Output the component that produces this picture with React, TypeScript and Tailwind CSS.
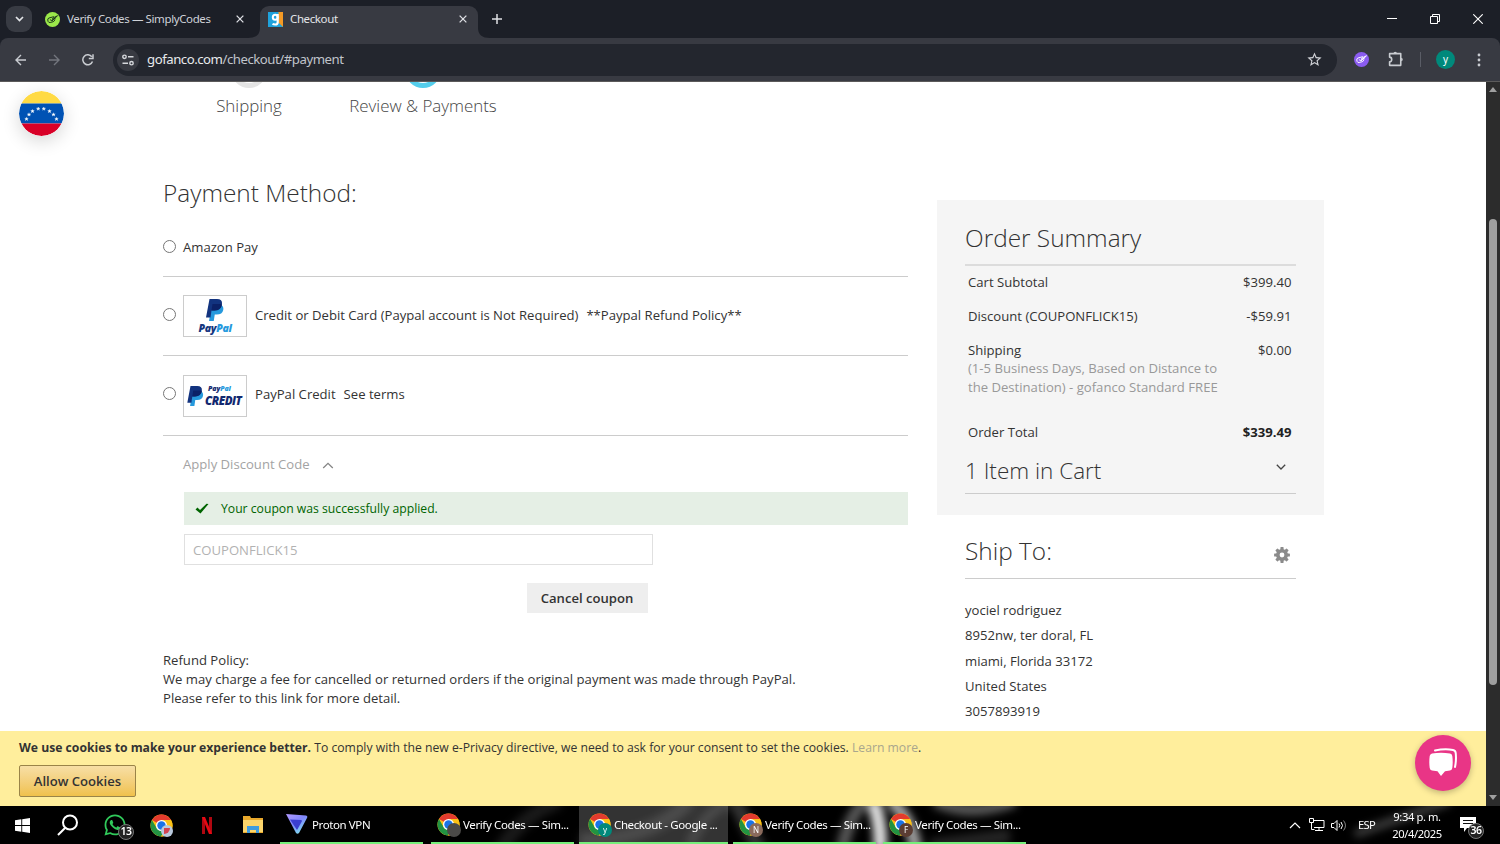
import React from "react";
import { FaWhatsapp } from "react-icons/fa";
import { MdStarBorder } from "react-icons/md";

const UI = "font-['Noto_Sans','Open_Sans',sans-serif]";

function ChromeLogo() {
  return (
    <svg viewBox="0 0 48 48" className="h-full w-full">
      <circle cx="24" cy="24" r="23" fill="#fbc116" />
      <path d="M24 24 4.1 12.5A23 23 0 0 1 43.9 12.5H24Z" fill="#e33b2e" />
      <path d="M4.1 12.5A23 23 0 0 0 23 47l10-17.5L24 24 14 29.7Z" fill="#229342" />
      <path d="M24 12.5h19.9A23 23 0 0 1 23 47l11-17.3Z" fill="#fbc116" />
      <circle cx="24" cy="24" r="11.5" fill="#fff" />
      <circle cx="24" cy="24" r="8.8" fill="#1a73e8" />
    </svg>
  );
}

function SimplyMark({ bg, fg }: { bg: string; fg: string }) {
  return (
    <svg viewBox="0 0 30 30" className="h-[15px] w-[15px] shrink-0">
      <circle cx="15" cy="15" r="15" fill={bg} />
      <g fill="none" stroke={fg} strokeWidth="1.9" strokeLinejoin="round" strokeLinecap="round">
        <path d="M17 9.500 8 12q-3 1-2.500 4l.8 3q1 2.500 4 2l6-1.500q3-1 3.500-4" />
        <path d="m10.500 15.500 3.500 2.500L25 7.500l-9 4.500-1.500 3 6-2.500" />
      </g>
    </svg>
  );
}

function CloseX() {
  return (
    <svg viewBox="0 0 10 10" width="8" height="8" className="shrink-0">
      <path d="m.8.8 8.4 8.4M9.2.8.8 9.2" stroke="#dfe1e5" strokeWidth="1.6" />
    </svg>
  );
}

function TabStrip() {
  return (
    <div className="flex h-[38px] shrink-0 items-end bg-[#1c1f27]">
      <div className="flex h-[38px] w-[45px] items-center pl-1.5">
        <div className="flex h-[26px] w-[26px] items-center justify-center rounded-[9px] bg-[#383b43]">
          <svg width="9" height="6" viewBox="0 0 9 6"><path d="m1 1 3.5 3.5L8 1" fill="none" stroke="#e3e5e8" strokeWidth="1.7" /></svg>
        </div>
      </div>
      <div className="flex h-[38px] w-[203px] items-center">
        <SimplyMark bg="#9be84a" fg="#18301a" />
        <span className="ml-[7px] w-[169px] whitespace-nowrap text-[11.5px] tracking-[-0.39px] text-[#cfd2d8]">Verify Codes — SimplyCodes</span>
        <CloseX />
      </div>
      <div className="flex h-[32px] items-end">
        <svg width="12" height="10" viewBox="0 0 12 10"><path d="M12 0v10H0Q12 10 12 0Z" fill="#383a42" /></svg>
        <div className="flex h-[32px] w-[218px] items-center rounded-t-[9px] bg-[#383a42] pb-1.5 pl-2 pr-[11px]">
          <svg width="15" height="15" viewBox="0 0 15 15" className="shrink-0">
            <path d="M0 0h15v15H0Z" fill="#1fa2dc" />
            <path d="M10.500 0H15v15l-4.500-4.500Z" fill="#f49a25" />
            <path d="M9.700 2v8.200q0 2.300-2.500 2.300-1.600 0-2.700-.6" fill="none" stroke="#fff" strokeWidth="2.200" />
            <ellipse cx="7.200" cy="5.300" rx="2.400" ry="2.500" fill="none" stroke="#fff" strokeWidth="2" />
          </svg>
          <span className="ml-[7px] flex-1 text-[11.5px] tracking-[-0.38px] text-[#e3e5e8]">Checkout</span>
          <CloseX />
        </div>
        <svg width="12" height="10" viewBox="0 0 12 10"><path d="M0 0v10h12Q0 10 0 0Z" fill="#383a42" /></svg>
      </div>
      <div className="flex h-[38px] flex-1 items-center pl-[2px]">
        <svg width="10" height="10" viewBox="0 0 10 10"><path d="M5 0v10M0 5h10" stroke="#dfe1e5" strokeWidth="1.5" /></svg>
      </div>
      <div className="flex h-[38px] w-[113px] items-center justify-between pr-[17px]">
        <svg width="10" height="10" viewBox="0 0 10 10"><path d="M0 4.500h10" stroke="#fff" /></svg>
        <svg width="10" height="10" viewBox="0 0 10 10" fill="none" stroke="#fff"><path d="M.5 2.500h7v7h-7ZM2.500 2.500v-2h7v7h-2" /></svg>
        <svg width="10" height="10" viewBox="0 0 10 10"><path d="m.3.3 9.400 9.400M9.700.3.3 9.700" stroke="#fff" strokeWidth="1.1" /></svg>
      </div>
    </div>
  );
}

function Toolbar() {
  return (
    <div className="shrink-0 bg-[#1c1f27]">
      <div className="flex h-[44px] items-center rounded-t-[8px] border-b border-[#5b5a5a] bg-[#383a42] pl-[15px]">
        <svg width="11" height="12" viewBox="0 0 11 12" fill="none" stroke="#c9ccd1" strokeWidth="1.4"><path d="M11 6H1M6 1 1 6l5 5" /></svg>
        <svg className="ml-[23px]" width="11" height="12" viewBox="0 0 11 12" fill="none" stroke="#73767d" strokeWidth="1.4"><path d="M0 6h10M5 1l5 5-5 5" /></svg>
        <svg className="ml-[22px]" width="12" height="12" viewBox="0 0 12 12" fill="none" stroke="#c9ccd1" strokeWidth="1.5"><path d="M10.500 7.500A5 5 0 1 1 9.800 2.700M11 .3v4.200H6.800" /></svg>
        <div className="ml-[19px] flex h-8 w-[1224px] items-center rounded-full bg-[#23262e] pl-1">
          <div className="flex h-[22px] w-[22px] items-center justify-center rounded-full bg-[#383a42]">
            <svg width="12" height="12" viewBox="0 0 12 12" fill="none" stroke="#d6d8dc" strokeWidth="1.4">
              <circle cx="2.500" cy="2.800" r="1.700" /><path d="M6 2.800h5.500M.5 9.200H6" /><circle cx="9.500" cy="9.200" r="1.700" />
            </svg>
          </div>
          <span className="ml-2 flex-1 text-[13.2px] tracking-[-0.47px] text-[#c0c4cb]"><span className="text-[#e8eaed]">gofanco.com</span>/checkout/#payment</span>
          <MdStarBorder className="mr-[14px] h-[17px] w-[17px] text-[#cfd1d6]" />
        </div>
        <div className="flex flex-1 items-center pl-[17px]">
          <SimplyMark bg="#8b5cf0" fg="#ffffff" />
          <svg className="ml-[19px]" width="17" height="17" viewBox="0 0 16 16" fill="none" stroke="#c9ccd1" strokeWidth="1.5">
            <path d="M1.500 2.500h10.500v11H1.500v-3.300q2 0 2-2.200t-2-2.200Z" strokeLinejoin="round" />
            <path d="M5.200 2.200a1.600 1.600 0 0 1 3.200 0ZM12.300 6.400a1.600 1.600 0 0 1 0 3.200Z" fill="#c9ccd1" stroke="none" />
          </svg>
          <div className="ml-[15px] h-[15px] w-px bg-[#5a5d66]" />
          <div className="ml-[15px] flex h-[19px] w-[19px] items-center justify-center rounded-full bg-[#00897b] pb-px text-[10px] text-white">y</div>
          <svg className="ml-[22px]" width="4" height="14" viewBox="0 0 4 14" fill="#c9ccd1"><circle cx="2" cy="2" r="1.400" /><circle cx="2" cy="7" r="1.400" /><circle cx="2" cy="12" r="1.400" /></svg>
        </div>
      </div>
    </div>
  );
}

function Flag() {
  const stars = [[7.5, 28], [10, 23.5], [13.500, 20.2], [19.2, 17.800], [24.8, 17.800], [30.500, 20.200], [34.500, 23.500], [37.500, 28]];
  return (
    <svg viewBox="0 0 45 45" className="h-[45px] w-[45px] rounded-full shadow-[0_5px_18px_rgba(0,0,0,0.16)]">
      <clipPath id="disc"><circle cx="22.500" cy="22.500" r="22.500" /></clipPath>
      <g clipPath="url(#disc)">
        <path d="M0 0h45v12.500H0Z" fill="#ffda44" />
        <path d="M0 12.500h45v20H0Z" fill="#0052b4" />
        <path d="M0 32.500h45V45H0Z" fill="#d80027" />
        {stars.map(([x, y]) => (
          <path key={x} transform={`translate(${x} ${y})`} d="M0-1.800.5-.6 1.800-.6.800.2 1.200 1.500 0 .8-1.200 1.500-.8.2-1.800-.6-.5-.6Z" fill="#fff" stroke="#fff" strokeWidth=".3" />
        ))}
      </g>
    </svg>
  );
}

function Gear() {
  const teeth = [0, 45, 90, 135];
  return (
    <svg className="mt-2" width="16" height="16" viewBox="0 0 16 16">
      {teeth.map((a) => (
        <rect key={a} x="6.400" y="0.100" width="3.200" height="15.800" rx=".6" fill="#8b8b8b" transform={`rotate(${a} 8 8)`} />
      ))}
      <circle cx="8" cy="8" r="6" fill="#8b8b8b" />
      <circle cx="8" cy="8" r="2.400" fill="#fff" />
    </svg>
  );
}

function PayPalP({ className }: { className: string }) {
  return (
    <svg viewBox="0 0 36 44" className={className}>
      <path d="M12 11h17q7 3 5.500 11-2 9-13 9h-4l-2 13H6Z" fill="#2699dd" />
      <path d="M7 0h15q11 0 10 10-2 13-15 13h-6l-2 14H0Z" fill="#12337f" />
      <path d="M13 10h14q5 0 5 1-2 12-15 12h-6Z" fill="#0b2167" />
    </svg>
  );
}

function Radio({ className = "" }: { className?: string }) {
  return <span className={`mr-[7px] h-[13px] w-[13px] shrink-0 rounded-full border border-[#767676] bg-white ${className}`} />;
}

function PaymentColumn() {
  return (
    <div className="w-[745px]">
      <h1 className="flex h-[38px] items-center text-[24.4px] font-light">Payment Method:</h1>
      <div className="flex h-[65px] items-center border-b border-[#ccc] pt-[8px]">
        <Radio className="mb-[3px]" />Amazon Pay
      </div>
      <div className="flex h-[79px] items-center border-b border-[#ccc]">
        <Radio className="mb-[3px]" />
        <div className="flex h-[42px] w-[64px] flex-col items-center border border-[#ccc]">
          <PayPalP className="mt-[3px] h-[22px] w-[18px]" />
          <div className="mt-px text-[10.5px] font-extrabold italic leading-[13px] tracking-[-0.3px] text-[#14377f]">Pay<span className="text-[#2699dd]">Pal</span></div>
        </div>
        <span className="ml-2">Credit or Debit Card (Paypal account is Not Required)</span>
        <span className="ml-2">**Paypal Refund Policy**</span>
      </div>
      <div className="flex h-[80px] items-center border-b border-[#ccc]">
        <Radio className="mb-[4px]" />
        <div className="flex h-[42px] w-[64px] items-center border border-[#ccc] pl-[3px]">
          <PayPalP className="h-[20px] w-[17px] shrink-0" />
          <div className="mb-px ml-[1px] font-extrabold italic text-[#12286f]">
            <div className="pl-[3px] text-[7px] leading-[10px] tracking-[-0.1px]">Pay<span className="text-[#2699dd]">Pal</span></div>
            <div className="text-[11.5px] leading-[13px] tracking-[-0.5px]">CREDIT</div>
          </div>
        </div>
        <span className="mb-[2px] ml-2">PayPal Credit</span>
        <span className="mb-[2px] ml-2">See terms</span>
      </div>
      <div className="pl-[21px]">
        <div className="flex h-[56px] items-center pt-px text-[#a3a3a3]">
          <span className="-ml-px">Apply Discount Code</span>
          <svg className="ml-[12px] mt-[2px]" width="12" height="7" viewBox="0 0 12 7"><path d="m1.200 6 4.800-4.700L10.800 6" fill="none" stroke="#858585" strokeWidth="1.300" /></svg>
        </div>
        <div className="flex h-[33px] items-center bg-[#e5efe5] pl-[11px] text-[12.2px] text-[#006400]">
          <svg width="14" height="11" viewBox="0 0 14 11"><path d="M.5 6.500 2.500 4.500 5 7 11.500.8 13.500 1 5.500 10.500Z" fill="#006400" /></svg>
          <span className="ml-3 mt-px">Your coupon was successfully applied.</span>
        </div>
        <div className="mt-[9px] flex h-[31px] w-[469px] items-center border border-[#e0e0e0] pl-2 pt-[2px] text-[#b2b2b2]">COUPONFLICK15</div>
        <div className="mt-[18px] flex w-[464px] justify-end">
          <button className="h-[30px] w-[121px] bg-[#eee] pr-px pt-px font-semibold">Cancel coupon</button>
        </div>
      </div>
      <div className="mt-[38px] leading-[18.75px]">
        <p>Refund Policy:</p>
        <p>We may charge a fee for cancelled or returned orders if the original payment was made through PayPal.</p>
        <p>Please refer to this link for more detail.</p>
      </div>
    </div>
  );
}

function SideColumn() {
  return (
    <div className="ml-[29px] w-[387px]">
      <div className="mt-[26px] h-[315px] bg-[#f5f5f5] px-7">
        <h2 className="flex h-[66px] items-center border-b-2 border-[#dcdcdc] pt-[12px] text-[24.4px] font-light">Order Summary</h2>
        <div className="pl-[3px] pr-[4.500px] leading-[18.75px]">
          <div className="flex h-[33px] items-center justify-between"><span>Cart Subtotal</span><span>$399.40</span></div>
          <div className="flex h-[34px] items-center justify-between"><span>Discount (COUPONFLICK15)</span><span>-$59.91</span></div>
          <div className="flex h-[81px] justify-between pt-[7.500px]">
            <div>
              <div>Shipping</div>
              <div className="w-[256px] text-[#999]">(1-5 Business Days, Based on Distance to the Destination) - gofanco Standard FREE</div>
            </div>
            <span>$0.00</span>
          </div>
          <div className="flex h-[37px] items-center justify-between"><span>Order Total</span><span className="font-bold text-[#222]">$339.49</span></div>
        </div>
        <div className="flex h-[43px] items-center justify-between border-b border-[#ccc] pb-[3px] pr-[10px] text-[22.5px] font-light">
          1 Item in Cart
          <svg className="mb-2" width="10" height="6" viewBox="0 0 10 6"><path d="m.8.8 4.200 4.200L9.200.8" fill="none" stroke="#444" strokeWidth="1.300" /></svg>
        </div>
      </div>
      <div className="mx-7">
        <div className="flex h-[64px] items-center justify-between border-b border-[#ccc] pr-1.5 pt-[9px]">
          <h2 className="text-[24.4px] font-light">Ship To:</h2>
          <Gear />
        </div>
        <div className="pt-[19px] leading-[25.3px]">
          <p>yociel rodriguez</p>
          <p>8952nw, ter doral, FL</p>
          <p>miami, Florida 33172</p>
          <p>United States</p>
          <p>3057893919</p>
        </div>
      </div>
    </div>
  );
}

function Steps() {
  return (
    <div className="flex h-[92px] items-start overflow-hidden pl-[199px] text-[16.9px] font-light text-[#444]">
      <div className="flex w-[100px] flex-col items-center">
        <div className="mt-[-30px] h-9 w-9 shrink-0 rounded-full border-[5px] border-[#e4e4e4]" />
        <span className="mt-[5px]">Shipping</span>
      </div>
      <div className="flex w-[248px] flex-col items-center">
        <div className="mt-[-30px] h-9 w-9 shrink-0 rounded-full border-[5px] border-[#54cdeb]" />
        <span className="mt-[5px]">Review &amp; Payments</span>
      </div>
    </div>
  );
}

function CookieBar() {
  return (
    <div className="h-[75px] shrink-0 bg-[#ffee9c] pl-[19px] pt-[7px] text-[12.2px] leading-5 text-[#333]">
      <p><b>We use cookies to make your experience better.</b> To comply with the new e-Privacy directive, we need to ask for your consent to set the cookies. <span className="text-[#a9a68d]">Learn more</span>.</p>
      <button className="mt-[7px] h-8 w-[117px] rounded-[2px] border border-[#9a8448] bg-linear-to-b from-[#f7dfa5] to-[#f0c14b] text-[13.1px] font-semibold text-[#333]">Allow Cookies</button>
    </div>
  );
}

function ChromeTask({ label, badge, tone, active, edge }: { label: string; badge: string; tone: string; active?: boolean; edge: string }) {
  return (
    <div className={`flex h-[38px] items-center border-b-2 border-[#76ee7b] ${edge} ${active ? "bg-white/20" : ""}`}>
      <div className="relative h-[23px] w-[23px] shrink-0">
        <ChromeLogo />
        <span className={`absolute left-[10px] top-[10px] flex h-[14px] w-[14px] items-center justify-center rounded-full text-[8px] text-white ${tone}`}>{badge}</span>
      </div>
      <span className="ml-[3px] mt-px whitespace-nowrap text-[11.5px] tracking-[-0.38px] text-white">{label}</span>
    </div>
  );
}

function Taskbar() {
  return (
    <div className="relative h-[38px] shrink-0 overflow-hidden bg-black text-white">
      <svg className="absolute inset-0" width="1500" height="38" viewBox="0 0 1500 38">
        <defs><filter id="soft" x="-5%" y="-50%" width="110%" height="200%"><feGaussianBlur stdDeviation="4" /></filter></defs>
        <g filter="url(#soft)" fill="none" stroke="#fff">
          <path d="M500 45Q520 10 560-5" strokeWidth="14" opacity=".1" />
          <path d="M580 34Q650 35 690-5" strokeWidth="14" opacity=".12" />
          <path d="M690 40Q700 10 730-5" strokeWidth="10" opacity=".12" />
          <path d="M735-5 760 45" strokeWidth="14" opacity=".2" />
          <path d="M842 45Q848 10 866-5" strokeWidth="12" opacity=".35" />
          <path d="M873-5Q882 20 880 45" strokeWidth="13" opacity=".9" />
          <path d="M890-5Q912 12 916 45" strokeWidth="12" opacity=".65" />
          <path d="M935-5Q970 12 1015-5" strokeWidth="12" opacity=".35" />
          <path d="M930 40 1010 30" strokeWidth="14" opacity=".14" />
          <path d="M1355 28 1450-5" strokeWidth="8" opacity=".25" />
        </g>
      </svg>
      <div className="relative flex h-[38px] items-center">
        <svg className="ml-[15px]" width="15" height="15" viewBox="0 0 15 15" fill="#fff"><path d="M0 2.200 6.300 1.300V7H0ZM7.200 1.200 15 0v7H7.200ZM0 8h6.300v5.700L0 12.800ZM7.200 8H15v7l-7.800-1.200Z" /></svg>
        <svg className="ml-[27px]" width="22" height="22" viewBox="0 0 22 22" fill="none" stroke="#fff" strokeWidth="2"><circle cx="13" cy="8.500" r="7" /><path d="M8.300 13.700 1 21" /></svg>
        <div className="relative ml-[24px] h-[24px] w-[24px]">
          <FaWhatsapp className="h-6 w-6 text-[#30c95a]" />
          <span className="absolute left-[15px] top-[11px] flex h-4 w-4 items-center justify-center rounded-full border border-[#777] bg-[#222] text-[10.500px] font-semibold tracking-[-0.4px]">13</span>
        </div>
        <div className="relative ml-[23px] h-[23px] w-[23px]">
          <ChromeLogo />
          <span className="absolute left-[11px] top-[11px] flex h-3 w-3 items-center justify-center rounded-full bg-[#b9c9dc]"><span className="h-[6px] w-[6px] rounded-tl-[1px] rounded-br-full bg-[#d34350]" /></span>
        </div>
        <svg className="ml-[29px]" width="10" height="17" viewBox="0 0 10 17"><path d="M0 0h3v17H0ZM7 0h3v17H7Z" fill="#b00710" /><path d="M0 0h3l7 17H7Z" fill="#e50914" /></svg>
        <svg className="ml-[31px]" width="20" height="18" viewBox="0 0 20 18"><path d="M0 2V0h7l1 2h12v15H0Z" fill="#e9a92c" /><path d="M0 4h20v12H0Z" fill="#fbd56b" /><path d="M4 17v-7h12v7h-3v-3H7v3Z" fill="#3f9ce0" /></svg>
        <div className="ml-[17px] flex h-[38px] w-[143px] items-center border-b-2 border-[#76ee7b] pl-[6px]">
          <svg width="22" height="20" viewBox="0 0 22 20">
            <defs><linearGradient id="vpn" x1="0" y1="0" x2=".7" y2="1"><stop stopColor="#b49aff" /><stop offset=".5" stopColor="#7f86fa" /><stop offset="1" stopColor="#7fe0f0" /></linearGradient></defs>
            <path d="M0 0 20 1.500q2 .3 1 2.500L13 19q-1.500 1.500-3 0Z" fill="url(#vpn)" /><path d="M4 5.500 15 6q1.500.3.800 1.500L11 16Z" fill="#3b3fd0" />
          </svg>
          <span className="ml-[4px] mt-px text-[11.5px] tracking-[-0.4px]">Proton VPN</span>
        </div>
        <ChromeTask edge="ml-2 w-[143px] pl-[6px]" label="Verify Codes — Sim..." badge="" tone="bg-[#4b4a48]" />
        <ChromeTask edge="ml-[5px] w-[149px] pl-[9px]" label="Checkout - Google ..." badge="y" tone="bg-[#00897b]" active />
        <ChromeTask edge="ml-[5px] w-[143px] pl-[6px]" label="Verify Codes — Sim..." badge="N" tone="bg-[#8a6a5c]" />
        <ChromeTask edge="ml-[7px] w-[143px] pl-[6px]" label="Verify Codes — Sim..." badge="F" tone="bg-[#5b3d33]" />
        <div className="flex-1" />
        <svg width="12" height="7" viewBox="0 0 12 7"><path d="m1 6 5-5 5 5" fill="none" stroke="#fff" strokeWidth="1.200" /></svg>
        <svg className="ml-2" width="16" height="14" viewBox="0 0 16 14" fill="none" stroke="#fff"><path d="M5 2.500h10v7H5M10 9.500V12M6 12.500h8M.5.500h4v4h-4ZM2.500 4.500v7h3" /></svg>
        <svg className="ml-[6px]" width="16" height="13" viewBox="0 0 16 13" fill="none" stroke="#fff"><path d="M.5 4.500H3l3-3v10l-3-3H.5ZM8 4.500q1.500 2 0 4M10 3q3 3.500 0 7" /><path d="M12.500 1.500q4 5 0 10" opacity=".5" /></svg>
        <span className="ml-[11px] w-[18px] whitespace-nowrap text-[11.200px] tracking-[-0.7px]">ESP</span>
        <div className="ml-[12px] flex w-[58px] flex-col items-center whitespace-nowrap pb-px text-[11.200px] leading-[17px] tracking-[-0.4px]"><span>9:34 p. m.</span><span>20/4/2025</span></div>
        <div className="relative ml-[14px] mr-[16px] h-[16px] w-[24px]">
          <svg width="16" height="16" viewBox="0 0 16 16"><path d="M0 0h16v11H7l-3 4v-4H0Z" fill="#fff" /><path d="M3 3.500h10M3 6.500h10" stroke="#111" /></svg>
          <span className="absolute left-[8px] top-[6px] flex h-4 w-4 items-center justify-center rounded-full border border-[#777] bg-[#222] text-[10.500px] font-semibold tracking-[-0.4px]">36</span>
        </div>
      </div>
    </div>
  );
}

export default function App() {
  return (
    <div className={`flex h-[844px] w-[1500px] flex-col overflow-hidden ${UI}`}>
      <TabStrip />
      <Toolbar />
      <div className="flex h-[724px] shrink-0">
        <div className="relative flex w-[1486px] flex-col overflow-hidden bg-white font-['Open_Sans',sans-serif] text-[13.125px] text-[#333]">
          <div className="h-[649px] shrink-0 overflow-hidden">
            <Steps />
            <div className="flex pl-[163px]">
              <PaymentColumn />
              <SideColumn />
            </div>
          </div>
          <CookieBar />
          <div className="absolute left-[19px] top-[9px]"><Flag /></div>
          <div className="absolute left-[1415px] top-[653px] flex h-14 w-14 items-center justify-center rounded-full bg-[#e93586] shadow-[0_2px_6px_rgba(0,0,0,0.25)]">
            <svg width="30" height="30" viewBox="0 0 30 30">
              <path d="M7 2.500Q17 .5 25 2q2.500.5 2.700 3 .8 7-.7 14" fill="none" stroke="#fff" strokeWidth="2" strokeLinecap="round" />
              <path d="M4 5.500q9-1.500 18 0 2 .4 2.300 2.500.8 6 0 12-.3 2-2.300 2.500l-5 .8L13 28l-3.500-4.700L4 22.500q-2-.5-2.300-2.500-.8-6 0-12Q2 6 4 5.500Z" fill="#fff" />
            </svg>
          </div>
        </div>
        <div className="flex w-[14px] flex-col items-center justify-between bg-[#2c2c2c] pb-[6px] pt-[5px]">
          <svg width="8" height="5" viewBox="0 0 8 5"><path d="M0 5 4 0l4 5Z" fill="#a0a0a0" /></svg>
          <div className="mb-[110px] mt-auto h-[466px] w-2 rounded-full bg-[#9f9f9f]" />
          <svg width="8" height="5" viewBox="0 0 8 5"><path d="M0 0h8L4 5Z" fill="#a0a0a0" /></svg>
        </div>
      </div>
      <Taskbar />
    </div>
  );
}
